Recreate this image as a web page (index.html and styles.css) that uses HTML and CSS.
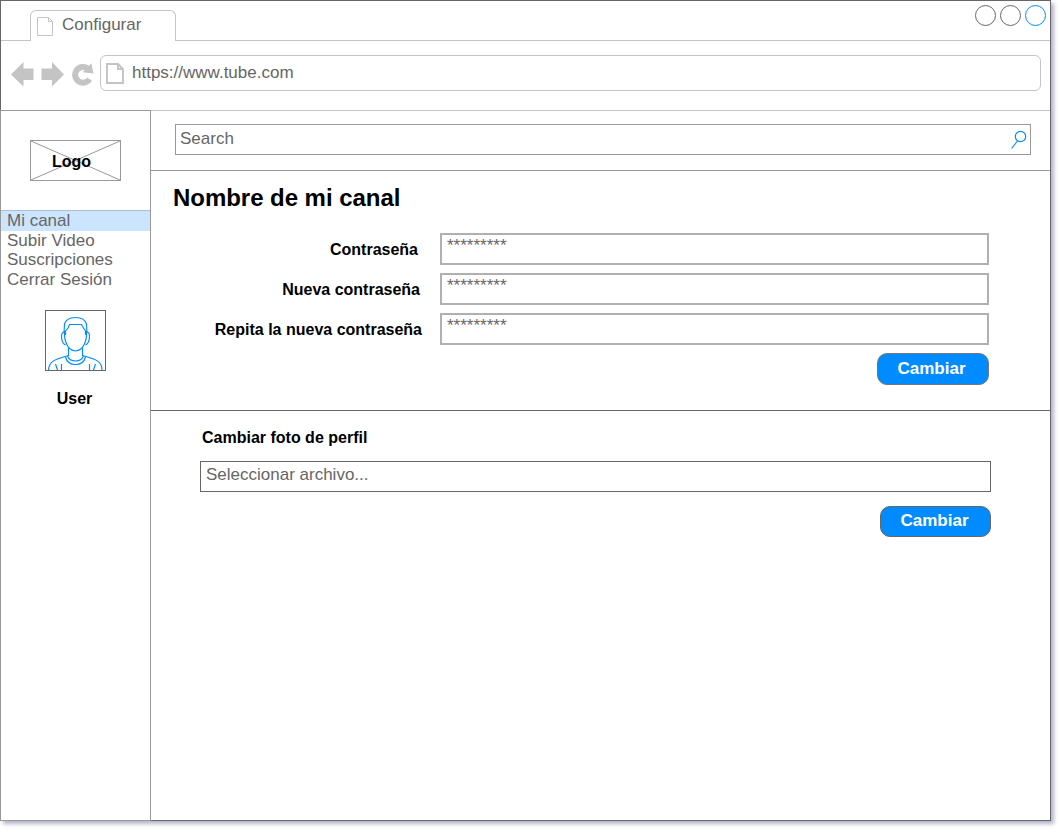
FILE: index.html
```html
<!DOCTYPE html>
<html lang="es">
<head>
<meta charset="utf-8">
<title>Configurar</title>
<link rel="stylesheet" href="styles.css">
</head>
<body>
<div class="window">
  <header class="tabstrip">
    <div class="tab">
      <svg class="tab-icon" width="17" height="20" viewBox="0 0 17 20"><path d="M.5 .5H11.500L15.500 4.500V18.500H.5ZM11.500 .5V4.500H15.500" fill="none" stroke="#c4c4c4"/></svg>
      <span>Configurar</span>
    </div>
    <div class="controls"><i class="dot"></i><i class="dot"></i><i class="dot dot-active"></i></div>
  </header>
  <div class="toolbar">
    <svg class="nav-icons" width="84" height="26" viewBox="0 0 84 26">
      <g fill="#c4c4c4">
        <path d="M0 13.500L12.500 1V7.500H22.500V19H12.500V25.500Z"/>
        <path d="M53 13.500L41 1V7.500H30.500V19H41V25.500Z"/>
        <path d="M80.300 2.300L82.500 12.600L71.500 11.300Z"/>
      </g>
      <path d="M76.800 7.500A7.900 7.900 0 1 0 78.600 18.200" fill="none" stroke="#c4c4c4" stroke-width="6"/>
    </svg>
    <div class="address">
      <svg width="18" height="21" viewBox="0 0 18 21"><path d="M1 1H12L17 6V20H1ZM12 1V6H17" fill="none" stroke="#c4c4c4" stroke-width="1.900"/></svg>
      <span>https://www.tube.com</span>
    </div>
  </div>
  <div class="body">
    <aside class="sidebar">
      <div class="logo">
        <svg class="cross" width="89" height="39" viewBox="0 0 89 39"><path d="M0 0L89 39M89 0L0 39" stroke="#999"/></svg>
        <span>Logo</span>
      </div>
      <nav class="menu">
        <a class="item selected">Mi canal</a>
        <a class="item item-tall">Subir Video</a>
        <a class="item">Suscripciones</a>
        <a class="item item-tall">Cerrar Sesión</a>
      </nav>
      <div class="avatar">
        <svg width="59" height="59" viewBox="0 0 59 59" fill="none" stroke="#008cff" stroke-width="1.150">
          <path d="M18 22L18.500 13C20 8 24 6.500 29.500 6.500S39 8 40.500 13L41 22"/>
          <path d="M19.500 24V20L22 17L23.500 13.500H35.500L37.500 17L39.500 20V24"/>
          <path d="M18.500 20C18 30 21.500 39.500 29.500 40C37.500 39.500 41 30 40.500 20"/>
          <path d="M18 21C14 21 15 32 19.500 34M41 21C45 21 44 32 39.500 34"/>
          <path d="M22.500 37V44.500C11.500 48 3 49 2.500 59M36.500 37V44.500C47.500 48 56 49 56 59"/>
          <path d="M21.500 45Q23.500 50 29.500 50T37.500 45M19.500 46Q21.500 53.500 29.500 53.500T39.500 46"/>
          <path d="M9.500 53L11.500 59M15.500 53V59M49.500 53L47.500 59M43.500 53V59"/>
        </svg>
      </div>
      <div class="user">User</div>
    </aside>
    <main class="content">
      <div class="searchbar">
        <div class="search">
          <span>Search</span>
          <svg width="17" height="19" viewBox="0 0 17 19"><g fill="none" stroke="#008cff" stroke-width="1.200"><circle cx="10.500" cy="6.500" r="5.200"/><path d="M7.500 11L1.500 18.500"/></g></svg>
        </div>
      </div>
      <section class="password">
        <h1 class="title">Nombre de mi canal</h1>
        <div class="row"><label class="label label-current">Contraseña</label><div class="field">*********</div></div>
        <div class="row"><label class="label label-new">Nueva contraseña</label><div class="field">*********</div></div>
        <div class="row"><label class="label">Repita la nueva contraseña</label><div class="field">*********</div></div>
        <button class="button button-soft">Cambiar</button>
      </section>
      <section class="photo">
        <h2 class="subtitle">Cambiar foto de perfil</h2>
        <div class="file">Seleccionar archivo...</div>
        <button class="button">Cambiar</button>
      </section>
    </main>
  </div>
</div>
</body>
</html>
```
FILE: styles.css
```css
* { box-sizing: border-box; }
body {
  margin: 0;
  min-height: 832px;
  background: #fff;
  color: #666;
  font: 17px/20px "Liberation Sans", Arial, sans-serif;
}
svg { display: block; flex: none; }
.window {
  display: flex;
  flex-direction: column;
  width: 1051px;
  height: 821px;
  border: 1px solid #666;
  background: #fff;
  box-shadow: 3px 3px 4px #b4b4cc;
}
.tabstrip {
  display: flex;
  justify-content: space-between;
  flex: none;
  height: 40px;
  padding-left: 29px;
  border-bottom: 1px solid #c4c4c4;
}
.tab {
  display: flex;
  width: 146px;
  height: 31px;
  margin-top: 9px;
  padding: 4px 0 0 6px;
  gap: 8px;
  border: 1px solid #c4c4c4;
  border-bottom: 0;
  border-radius: 6px 6px 0 0;
  background: #fff;
}
.tab-icon { margin-top: 2px; }
.controls { display: flex; gap: 4px; padding: 4px 4px 0 0; }
.dot { width: 21px; height: 21px; border: 1px solid #666; border-radius: 50%; }
.dot-active { border-color: #008cff; }
.toolbar {
  display: flex;
  flex: none;
  height: 70px;
  padding: 14px 9px 0 10px;
  border-bottom: 1px solid #c4c4c4;
}
.nav-icons { margin: 6px 5px 0 0; }
.address {
  display: flex;
  flex: 1;
  gap: 8px;
  height: 36px;
  padding: 7px 0 0 5px;
  border: 1px solid #c4c4c4;
  border-radius: 6px;
}
.body { display: flex; flex: 1; }
.sidebar {
  flex: none;
  width: 151px;
  margin: -1px 0 -1px -1px;
  border: 1px solid #999;
}
.logo {
  display: grid;
  width: 91px;
  height: 41px;
  margin: 29px 0 0 29px;
  border: 1px solid #999;
  color: #000;
  font-size: 16px;
  font-weight: bold;
}
.cross, .logo span { grid-area: 1 / 1; }
.logo span { padding: 11px 0 0 21px; z-index: 1; }
.menu { height: 79px; margin-top: 29px; }
.item { display: block; height: 20px; padding-left: 6px; line-height: 20px; }
.item-tall { height: 19px; line-height: 20px; }
.selected { height: 21px; border-top: 1px solid #a9bfd6; background: #cce5ff; line-height: 19px; }
.avatar { width: 61px; height: 61px; margin: 21px 0 0 44px; border: 1px solid #666; }
.user {
  margin: 18px 2px 0 0;
  color: #000;
  font-size: 16px;
  font-weight: bold;
  text-align: center;
}
.content { flex: 1; }
.searchbar { height: 60px; padding: 13px 19px 0 24px; border-bottom: 1px solid #999; }
.search {
  display: flex;
  justify-content: space-between;
  height: 31px;
  padding: 4px 3px 0 4px;
  border: 1px solid #999;
}
.search svg { margin-top: 1px; }
.password { height: 240px; padding: 11px 61px 0 0; border-bottom: 1px solid #666; }
.title { margin: 0 0 19px 22px; color: #000; font-size: 24px; line-height: 32px; letter-spacing: -.04px; }
.row { display: flex; height: 32px; margin-bottom: 8px; }
.label {
  width: 289px;
  padding: 7px 18px 0 0;
  color: #000;
  font-size: 16px;
  font-weight: bold;
  text-align: right;
}
.label-current { padding-right: 22px; }
.label-new { padding-right: 20px; }
.field { flex: 1; padding: 1px 0 0 5px; border: 2px solid #b0b0b0; }
.button {
  display: block;
  width: 111px;
  height: 31px;
  margin: 0 0 0 auto;
  padding: 0 2px 2px 0;
  border: 1px solid #666;
  border-radius: 10px;
  background: #008cff;
  color: #fff;
  font: bold 17px/20px "Liberation Sans", Arial, sans-serif;
}
.button-soft { width: 112px; height: 32px; padding: 1px 3px 1px 0; border-color: #777; }
.photo { padding: 17px 59px 0 49px; }
.subtitle { margin: 0 0 13px 2px; color: #000; font-size: 16px; line-height: 20px; }
.file { height: 31px; margin-bottom: 14px; padding: 3px 0 0 5px; border: 1px solid #666; }
```
